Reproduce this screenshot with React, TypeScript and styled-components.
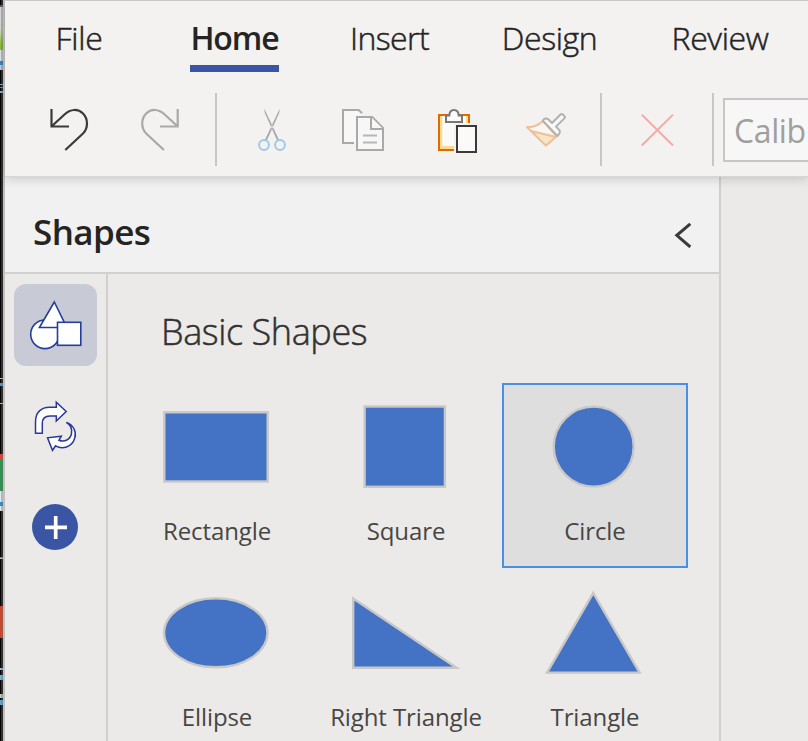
import React from 'react';
import styled, { createGlobalStyle } from 'styled-components';

const GlobalStyle = createGlobalStyle`
  * { box-sizing: border-box; }
  html, body { margin: 0; padding: 0; overflow: hidden; }
  body { font-family: 'Open Sans', 'Noto Sans', sans-serif; background: #ebeae8; }
  button { font: inherit; color: inherit; padding: 0; border: 0; background: none; }
  svg { display: block; flex: none; }
`;

const Screen = styled.div`
  display: flex;
  width: 808px;
  height: 741px;
  overflow: hidden;
`;

const DesktopEdge = styled.div`
  flex: none;
  width: 5px;
  border-right: 2px solid #c1c0c1;
  background:
    linear-gradient(90deg, transparent 1px, rgba(110, 110, 110, 0.4) 1px),
    linear-gradient(
      180deg,
      #050505 0 5px, #55585c 5px 7px, #d8dadb 7px 18px, #d5dcc8 30px, #8fc43c 44px 50px,
      #dfe5ec 50px 61px, #2b8bce 61px 65px, #cbd0de 65px 70px, #050505 70px 84px,
      #8dbbe0 84px 85px, #050505 85px 87px, #b08058 87px 88px, #050505 88px 91px,
      #8fb8d8 91px 93px, #050505 93px 378px, #c8d0d6 378px 379px, #050505 379px 383px,
      #4e9cd2 383px 386px, #050505 386px 403px, #c8c8c8 403px 404px, #050505 404px 454px,
      #d84435 454px 460px, #2f9250 460px 491px, #dfe6ec 491px 502px, #328fce 502px 506px,
      #dfe6ec 506px 511px, #050505 511px 557px, #b06c40 557px 558px, #d0d0d0 558px 559px,
      #050505 559px 606px, #c94729 606px 638px, #050505 638px 668px, #a8c4d8 668px 670px,
      #050505 670px 675px, #74b8dc 675px 680px, #050505 680px 694px, #b8d0c0 694px 698px,
      #050505 698px 700px, #65a8d8 700px 705px, #050505 705px
    );
`;

const AppWindow = styled.div`
  flex: 1;
  min-width: 0;
  display: flex;
  flex-direction: column;
`;

const Ribbon = styled.header`
  position: relative;
  z-index: 1;
  flex: none;
  height: 177px;
  background: #f3f2f1;
  border-top: 1px solid #c8c8c8;
  border-bottom: 1px solid #d6d6d5;
  box-shadow: 0 2px 10px rgba(0, 0, 0, 0.17);
`;

const Tabs = styled.nav`
  display: flex;
  height: 71px;
  padding-left: 51px;
`;

const Tab = styled.button<{ $width: number; $gap: number; $spacing: number; $active?: boolean }>`
  flex: none;
  width: ${(p) => p.$width}px;
  margin-right: ${(p) => p.$gap}px;
  padding-top: 15px;
  display: flex;
  justify-content: center;
  align-items: flex-start;
  font-size: 32px;
  line-height: 44px;
  font-weight: ${(p) => (p.$active ? 600 : 300)};
  -webkit-text-stroke: ${(p) => (p.$active ? 0 : 0.5)}px #252423;
  letter-spacing: ${(p) => p.$spacing}px;
  white-space: nowrap;
  color: #252423;
  border-bottom: 7px solid ${(p) => (p.$active ? '#3955a3' : 'transparent')};
`;

const Toolbar = styled.div`
  display: flex;
  align-items: center;
  height: 73px;
  margin-top: 21px;
  padding-left: 19px;
`;

const Tool = styled.button`
  flex: none;
  width: 91px;
  height: 64px;
`;

const Divider = styled.span`
  flex: none;
  width: 2px;
  height: 73px;
  margin: 0 10px 0 9px;
  background: #c8c6c4;
`;

const FontBox = styled.div`
  flex: none;
  width: 180px;
  height: 64px;
  margin-left: -1px;
  padding-left: 9px;
  border: 2px solid #c8c6c4;
  background: #f7f7f7;
  color: #a19f9d;
  font-size: 32px;
  line-height: 62px;
  letter-spacing: -0.4px;
`;

const Workspace = styled.main`
  flex: 1;
  min-height: 0;
  display: flex;
  background: #ebeae8;
`;

const Panel = styled.aside`
  flex: none;
  width: 716px;
  display: flex;
  flex-direction: column;
  border-right: 2px solid #d0cfce;
`;

const PanelHeader = styled.div`
  flex: none;
  height: 97px;
  display: flex;
  justify-content: space-between;
  padding: 30px 27px 0 28px;
  background: #f1f1f1;
  border-bottom: 2px solid #d2d0ce;
`;

const PanelTitle = styled.h1`
  margin: 0;
  font-size: 35px;
  line-height: 50px;
  font-weight: 600;
  letter-spacing: -0.6px;
  color: #252423;
`;

const CollapseButton = styled.button`
  width: 18px;
  height: 26px;
  margin-top: 15px;
`;

const PanelBody = styled.div`
  flex: 1;
  min-height: 0;
  display: flex;
`;

const Rail = styled.div`
  flex: none;
  width: 103px;
  display: flex;
  flex-direction: column;
  align-items: flex-start;
  gap: 18px;
  padding: 10px 0 0 9px;
  border-right: 2px solid #d2d0ce;
`;

const RailButton = styled.button<{ $selected?: boolean }>`
  width: 83px;
  height: 82px;
  border-radius: 12px;
  background: ${(p) => (p.$selected ? '#c8cad6' : 'transparent')};
`;

const Library = styled.section`
  flex: 1;
  min-width: 0;
  overflow: hidden;
`;

const LibraryTitle = styled.h2`
  margin: 33px 0 0 53px;
  height: 51px;
  font-size: 36px;
  line-height: 50px;
  font-weight: 300;
  -webkit-text-stroke: 0.5px #323130;
  letter-spacing: -0.4px;
  color: #323130;
`;

const ShapeGrid = styled.div`
  display: grid;
  grid-template-columns: repeat(3, 186px);
  grid-auto-rows: 185px;
  gap: 1px 3px;
  margin: 25px 0 0 16px;
`;

const ShapeTile = styled.button<{ $selected?: boolean }>`
  display: flex;
  flex-direction: column;
  align-items: center;
  overflow: hidden;
  background: ${(p) => (p.$selected ? '#dedede' : 'transparent')};
  box-shadow: ${(p) => (p.$selected ? 'inset 0 0 0 2px #4a90e2' : 'none')};
`;

const ShapeLabel = styled.span`
  height: 36px;
  margin-top: 20px;
  font-size: 24px;
  line-height: 36px;
  letter-spacing: -0.1px;
  white-space: nowrap;
  color: #484644;
`;

const tabs = [
  { label: 'File', width: 46, gap: 88, spacing: -0.3 },
  { label: 'Home', width: 89, gap: 71, spacing: -1.1, active: true },
  { label: 'Insert', width: 79, gap: 72, spacing: -0.6 },
  { label: 'Design', width: 97, gap: 73, spacing: -0.4 },
  { label: 'Review', width: 98, gap: 0, spacing: -0.4 },
];

const shapes = [
  { label: 'Rectangle', art: <rect x="40.3" y="29.3" width="103.4" height="69.2" /> },
  { label: 'Square', art: <rect x="51.6" y="23.5" width="80.3" height="80.3" /> },
  { label: 'Circle', selected: true, art: <circle cx="91.7" cy="63.6" r="40" /> },
  { label: 'Ellipse', art: <ellipse cx="91.8" cy="63.8" rx="51.7" ry="34.5" /> },
  { label: 'Right Triangle', art: <path d="M40.2 29.5V98.7H143.5Z" /> },
  { label: 'Triangle', art: <path d="M91.3 24L137.6 103.6H45Z" /> },
];

const UndoIcon = () => (
  <svg width="91" height="64" viewBox="24 98 91 64" fill="none" stroke="#3b3a39" strokeWidth="2.2">
    <path d="M51.5 109V126.5H69M52 126L64.5 114.5C70.5 108.8 78 108.5 83 113.5C88.3 118.8 88.3 128.2 83 133.5L65.3 150" />
  </svg>
);

const RedoIcon = () => (
  <svg width="91" height="64" viewBox="115 98 91 64" fill="none" stroke="#aaa9a8" strokeWidth="2.2">
    <path d="M177.7 109V126.5H160M177.2 126L164.7 114.5C158.7 108.8 151.2 108.5 146.2 113.5C140.9 118.8 140.9 128.2 146.2 133.5L163.9 150" />
  </svg>
);

const CutIcon = () => (
  <svg width="91" height="64" viewBox="227 98 91 64" fill="none">
    <path d="M264.2 108.5L279.2 140.2L277.4 141.1L264.8 113ZM279.8 108.5L264.8 140.2L266.6 141.1L279.2 113Z" fill="#a8a7a6" />
    <circle cx="264" cy="145" r="4.9" stroke="#9dcae6" strokeWidth="2" />
    <circle cx="280" cy="145" r="4.9" stroke="#9dcae6" strokeWidth="2" />
  </svg>
);

const CopyIcon = () => (
  <svg width="91" height="64" viewBox="318 98 91 64" fill="#f7f7f7" stroke="#aaa9a8" strokeWidth="2">
    <path d="M343 110H358.7L362 113.3V116H356V143H343Z" stroke="none" />
    <path d="M354 143H343V110H358.7L362 113.3" fill="none" />
    <path d="M357 117H372.2L383 128V150H357Z" />
    <path d="M371 117V129H383" />
    <path d="M363 135.5H377M363 142.5H377" stroke="#b8b7b6" />
  </svg>
);

const PasteIcon = () => (
  <svg width="91" height="64" viewBox="409 98 91 64">
    <rect x="438" y="114" width="32" height="37" fill="#dd6b00" />
    <rect x="440" y="116" width="28" height="33" fill="#f8db8f" />
    <rect x="442.3" y="116" width="23.7" height="30" fill="#fafafa" />
    <path d="M446 122V115.5H449.3C449.8 108.3 458.2 108.3 458.7 115.5H462V122Z" fill="#fafafa" stroke="#797774" strokeWidth="2" />
    <rect x="454" y="123" width="24" height="31" fill="#f3f2f1" />
    <rect x="457" y="126" width="19" height="26" fill="#fafafa" stroke="#3b3a39" strokeWidth="2" />
  </svg>
);

const BrushIcon = () => (
  <svg width="91" height="64" viewBox="500 98 91 64" strokeWidth="2" strokeLinejoin="round">
    <path d="M527 127C533 127.5 538 125.5 543 121L556.5 136L545.8 145.4Z" fill="#f8f6f3" stroke="#efbf97" />
    <path d="M531 131L556 137L545.8 145.4Z" fill="#f5e6c8" stroke="#efbf97" />
    <path d="M542.8 120.8C544 118.5 546.2 117.5 548.5 119.5L552 123L560.3 114.7C561.2 113.7 562 113.9 562.8 114.6L564.6 116.2C565.2 117 565.1 117.7 564.4 118.4L556 126.6L559.2 129.9C560.8 131.6 559.5 133.8 557.4 136Z" fill="#f7f7f7" stroke="#b3b1af" />
  </svg>
);

const DeleteIcon = () => (
  <svg width="91" height="64" viewBox="611.5 98 91 64" fill="none" stroke="#f4a9a7" strokeWidth="2">
    <path d="M641.3 114.6L672.5 145.5M672.5 114.6L641.3 145.5" />
  </svg>
);

const ShapesIcon = () => (
  <svg width="83" height="82" viewBox="14 284 83 82" fill="#fff" stroke="#243e9b" strokeWidth="1.6">
    <circle cx="45" cy="334.3" r="14.3" />
    <path d="M54.3 302L66.8 327.5H39.4Z" />
    <rect x="57.5" y="322.3" width="23.3" height="23" />
  </svg>
);

const ReplaceIcon = () => (
  <svg width="83" height="82" viewBox="14 384 83 82" fill="#fff" stroke="#28399a" strokeWidth="1.5">
    <path d="M35.5 433.3V422C35.5 412 41.5 407.3 49.5 407.3H56.3V402.3L66.2 411.5L56.3 421V416H50C44.5 416 42.3 418.5 42.3 423.5V433.3Z" />
    <path d="M66.3 422.4C73.5 424.5 76.7 432 74.8 438C72 447.5 62 449.7 55.6 445.8L52.5 450.3L47.5 437.8L61.3 436.2L59 440.2C64.5 442.4 70.3 439.7 71.5 433.5C72.3 428.7 70 424.5 66.3 422.4Z" />
  </svg>
);

const AddIcon = () => (
  <svg width="83" height="82" viewBox="14 484 83 82">
    <circle cx="55" cy="527" r="23" fill="#3955a3" />
    <path d="M55.7 516V539M45 527.3H67" stroke="#fff" strokeWidth="3.7" />
  </svg>
);

export default function App() {
  return (
    <>
      <GlobalStyle />
      <Screen>
        <DesktopEdge />
        <AppWindow>
          <Ribbon>
            <Tabs>
              {tabs.map((t) => (
                <Tab key={t.label} $width={t.width} $gap={t.gap} $spacing={t.spacing} $active={t.active}>
                  {t.label}
                </Tab>
              ))}
            </Tabs>
            <Toolbar>
              <Tool aria-label="Undo"><UndoIcon /></Tool>
              <Tool aria-label="Redo"><RedoIcon /></Tool>
              <Divider />
              <Tool aria-label="Cut"><CutIcon /></Tool>
              <Tool aria-label="Copy"><CopyIcon /></Tool>
              <Tool aria-label="Paste"><PasteIcon /></Tool>
              <Tool aria-label="Format painter"><BrushIcon /></Tool>
              <Divider />
              <Tool aria-label="Delete"><DeleteIcon /></Tool>
              <Divider />
              <FontBox>Calibri</FontBox>
            </Toolbar>
          </Ribbon>
          <Workspace>
            <Panel>
              <PanelHeader>
                <PanelTitle>Shapes</PanelTitle>
                <CollapseButton aria-label="Collapse">
                  <svg width="18" height="26" viewBox="674 222 18 26" fill="none" stroke="#3b3a39" strokeWidth="3">
                    <path d="M690.3 223.8L676.8 235.3L690.3 247" />
                  </svg>
                </CollapseButton>
              </PanelHeader>
              <PanelBody>
                <Rail>
                  <RailButton $selected aria-label="Shapes"><ShapesIcon /></RailButton>
                  <RailButton aria-label="Replace shape"><ReplaceIcon /></RailButton>
                  <RailButton aria-label="Add shapes"><AddIcon /></RailButton>
                </Rail>
                <Library>
                  <LibraryTitle>Basic Shapes</LibraryTitle>
                  <ShapeGrid>
                    {shapes.map((s) => (
                      <ShapeTile key={s.label} $selected={s.selected}>
                        <svg width="186" height="110" viewBox="0 0 186 110" fill="#4472c4" stroke="#c8c8c8" strokeWidth="2.4">
                          {s.art}
                        </svg>
                        <ShapeLabel>{s.label}</ShapeLabel>
                      </ShapeTile>
                    ))}
                  </ShapeGrid>
                </Library>
              </PanelBody>
            </Panel>
          </Workspace>
        </AppWindow>
      </Screen>
    </>
  );
}
